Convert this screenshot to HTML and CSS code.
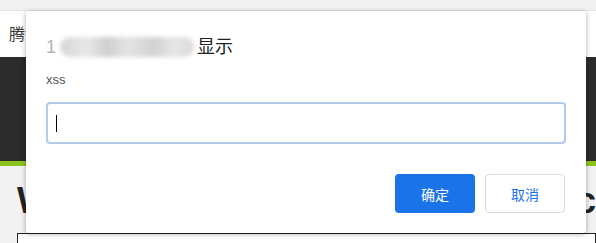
FILE: index.html
```html
<!DOCTYPE html>
<html lang="zh-CN">
<head>
    <meta charset="UTF-8">
    <meta name="viewport" content="width=device-width, initial-scale=1.0">
    <title>xss</title>
    <link rel="stylesheet" href="styles.css">
</head>
<body>

    <div class="topbar"></div>

    <div class="header">腾讯</div>

    <div class="hero"></div>
    <div class="accent"></div>

    <div class="main">
        <h1 class="headline"><span>W</span><span>c</span></h1>
        <div class="box"></div>
    </div>

    <!-- prompt dialog -->
    <div class="dialog">
        <div class="dialog-title">
            <span class="origin">1</span><span class="blur"></span><span class="title-text">显示</span>
        </div>
        <div class="dialog-msg">xss</div>
        <div class="prompt-input"><span class="caret"></span></div>
        <div class="dialog-actions">
            <button class="btn btn-ok">确定</button>
            <button class="btn btn-cancel">取消</button>
        </div>
    </div>

</body>
</html>
```

FILE: styles.css
```css
body {
    margin: 0;
    padding: 0;
    font-family: "Liberation Sans", "Noto Sans CJK SC", sans-serif;
    background-color: #f2f2f2;
    color: #333;
    overflow: hidden;
}
.topbar {
    height: 10px;
    background-color: #f1f1f1;
    border-bottom: 1px solid #e4e4e4;
}
.header {
    height: 46px;
    background-color: #fff;
    padding-left: 9px;
    font-size: 16px;
    line-height: 48px;
    color: #333;
}
.hero {
    height: 104px;
    background-color: #2b2b2b;
}
.accent {
    height: 5px;
    background-color: #8cc21f;
}
.main {
    padding-top: 14px;
}
.headline {
    display: flex;
    justify-content: space-between;
    margin: 0;
    padding-left: 17px;
    font-size: 36px;
    font-weight: bold;
    color: #222;
}
.box {
    margin: 11px 0 0 17px;
    height: 9px;
    background-color: #fff;
    border: 1px solid #222;
    border-bottom: none;
}

/* dialog */
.dialog {
    position: absolute;
    top: 11px;
    left: 26px;
    width: 560px;
    box-sizing: border-box;
    padding: 24px 20px 20px 20px;
    background-color: #fff;
    border-radius: 3px;
    box-shadow: 0 1px 5px rgba(0, 0, 0, 0.35);
}
.dialog-title {
    font-size: 18px;
    line-height: 24px;
    color: #202124;
    display: flex;
    align-items: center;
}
.origin {
    color: #b5b5b5;
    margin-right: 4px;
}
.blur {
    display: inline-block;
    width: 134px;
    height: 20px;
    margin-right: 3px;
    border-radius: 10px;
    background: linear-gradient(90deg, #d6d6d6, #e8e8e8 20%, #cfcfcf 35%, #e4e4e4 50%, #d2d2d2 70%, #e6e6e6 85%, #dadada);
    filter: blur(2px);
}
.dialog-msg {
    margin-top: 12px;
    font-size: 13px;
    line-height: 18px;
    color: #555;
}
.prompt-input {
    margin-top: 13px;
    height: 42px;
    box-sizing: border-box;
    border: 2px solid #b3cbe8;
    border-radius: 4px;
    padding: 11px 8px;
}
.caret {
    display: block;
    width: 1px;
    height: 17px;
    background-color: #000;
}
.dialog-actions {
    display: flex;
    justify-content: flex-end;
    gap: 10px;
    margin-top: 30px;
    padding-right: 1px;
}
.btn {
    width: 80px;
    height: 39px;
    border-radius: 4px;
    font-size: 14px;
    font-family: "Liberation Sans", "Noto Sans CJK SC", sans-serif;
    cursor: pointer;
}
.btn-ok {
    background-color: #1a73e8;
    color: #fff;
    border: none;
}
.btn-cancel {
    background-color: #fff;
    color: #1a73e8;
    border: 1px solid #dadce0;
}
```
